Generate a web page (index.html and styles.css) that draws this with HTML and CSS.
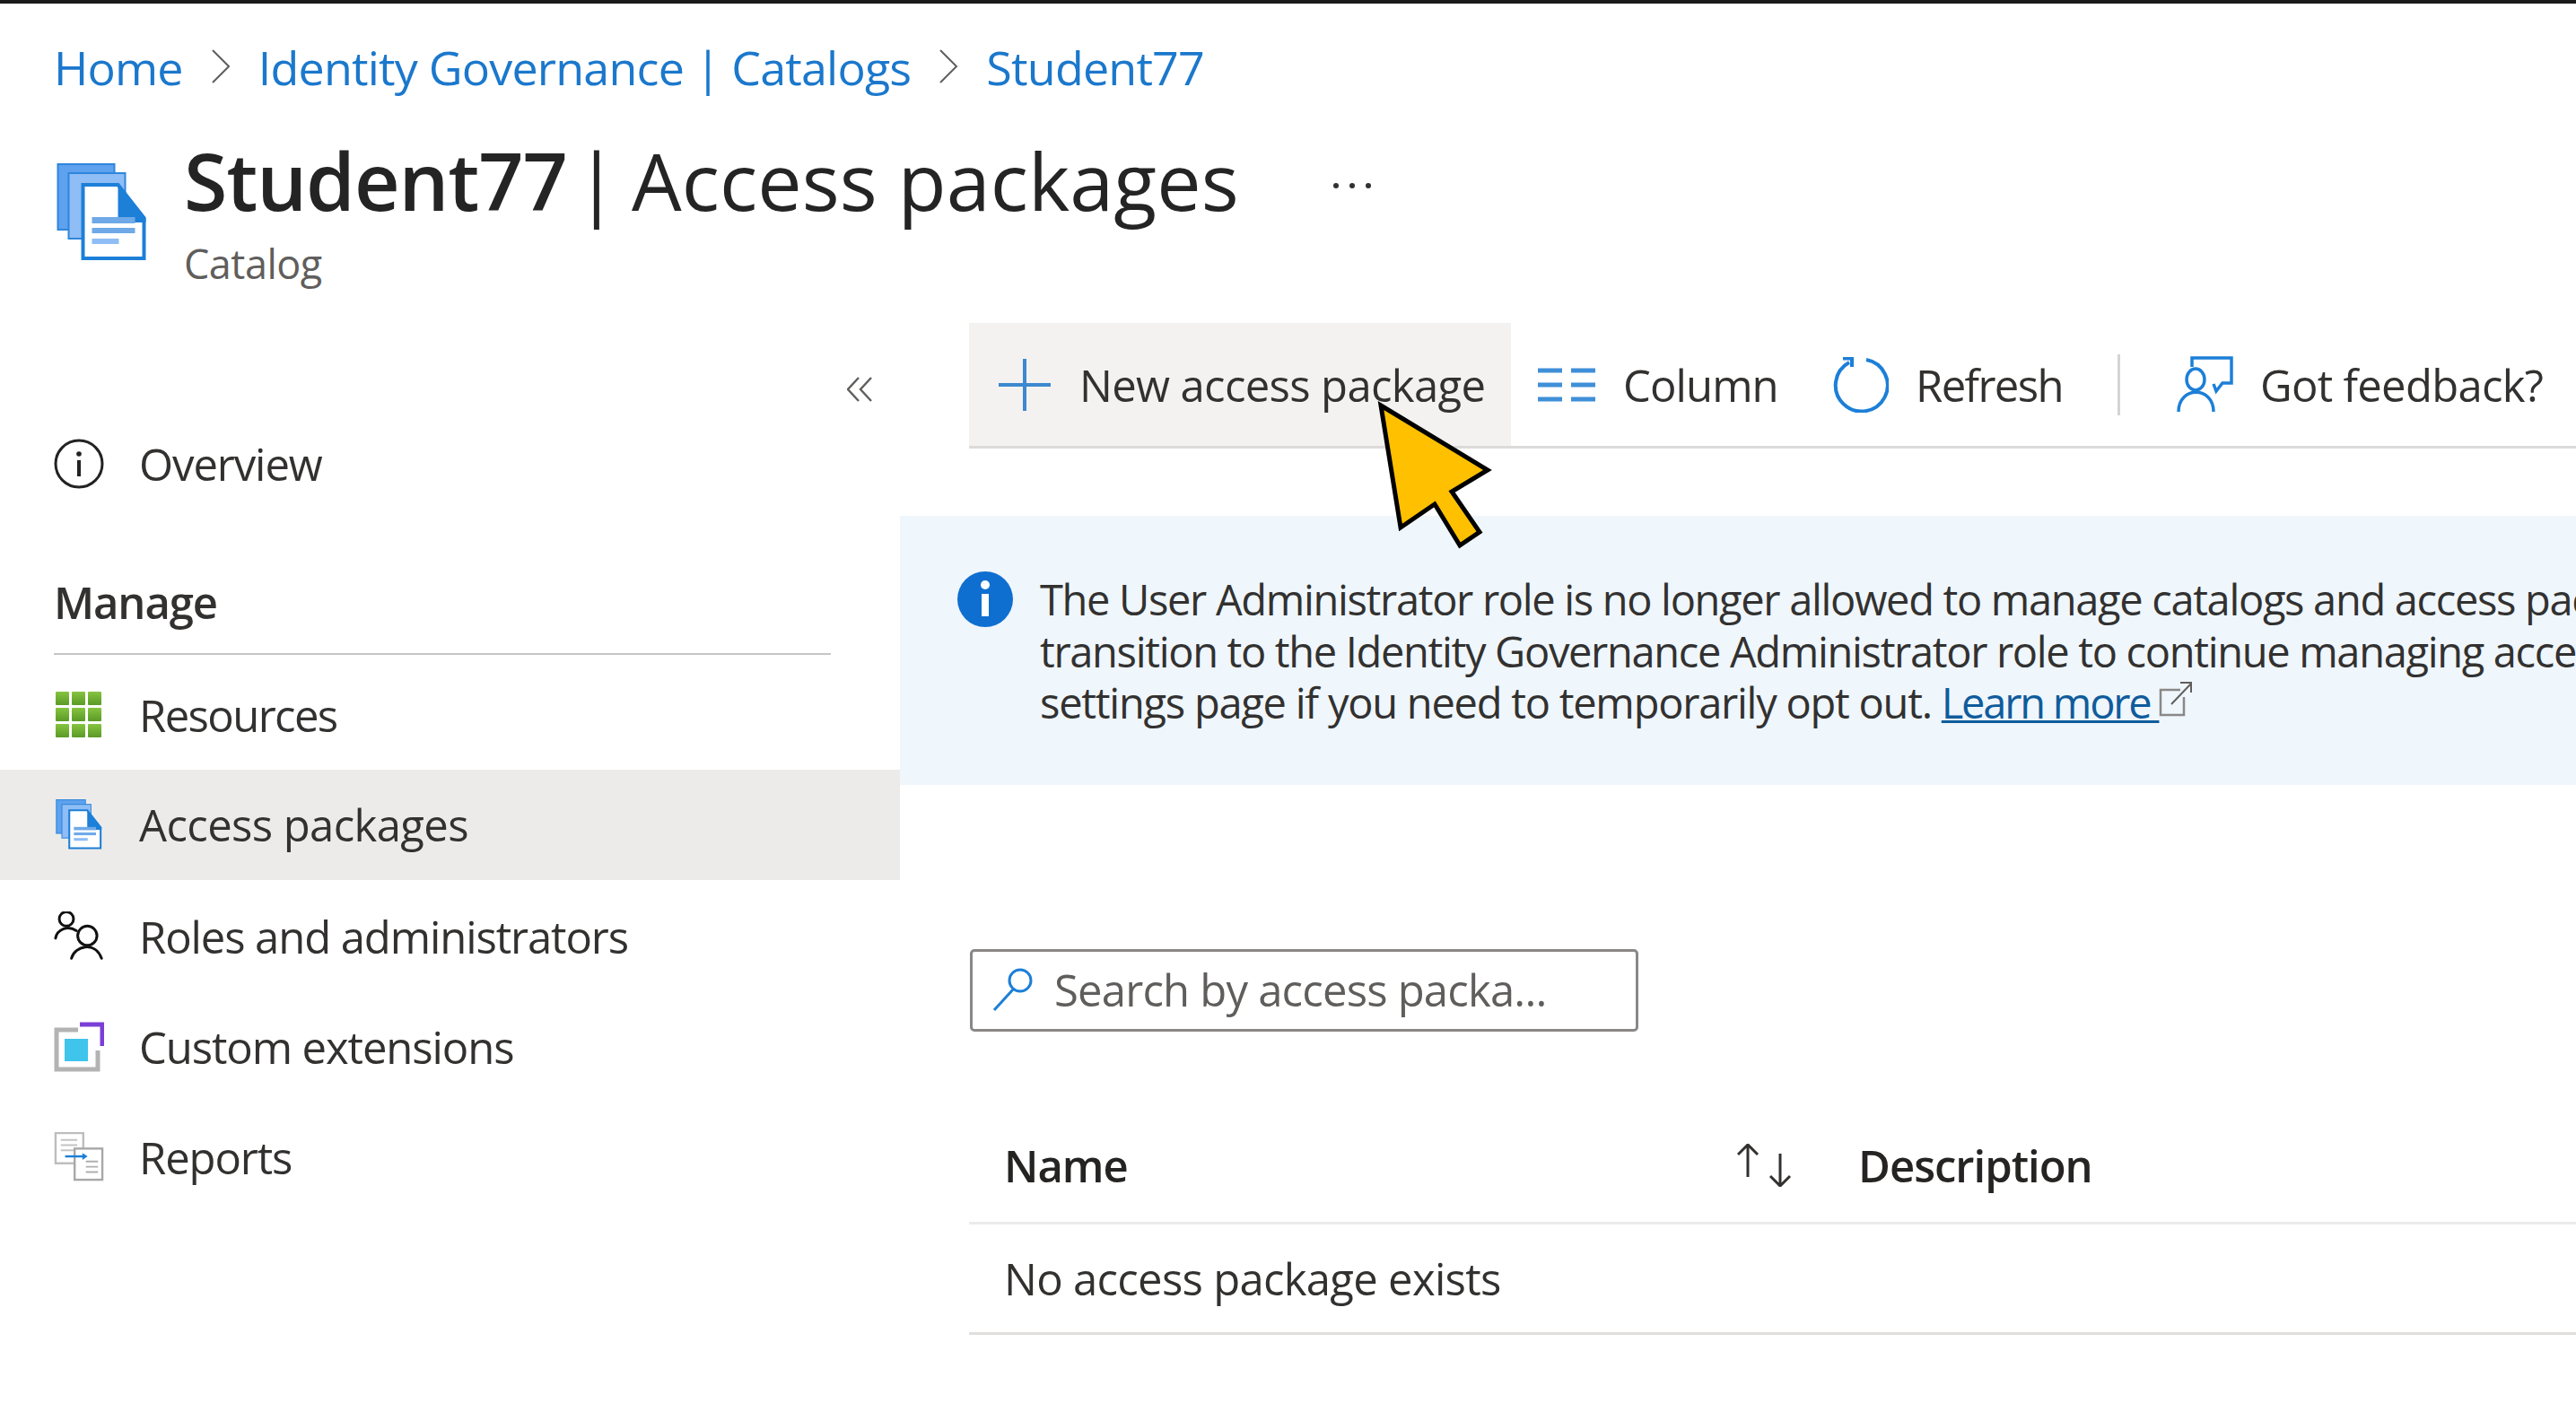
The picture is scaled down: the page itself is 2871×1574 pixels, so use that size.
FILE: index.html
```html
<!DOCTYPE html>
<html lang="en">
<head>
<meta charset="utf-8">
<title>Student77 | Access packages</title>
<link rel="stylesheet" href="styles.css">
</head>
<body>
<svg class="defs" width="0" height="0">
  <defs>
    <linearGradient id="green" x1="0" y1="0" x2="0" y2="1"><stop offset="0" stop-color="#86c440"/><stop offset="1" stop-color="#5a9a26"/></linearGradient>
    <symbol id="pkg" viewBox="64 182 100 109">
      <rect x="65" y="183" width="63" height="73" fill="#5ea1ee" stroke="#2f86dc" stroke-width="2"/>
      <rect x="77" y="193" width="63" height="73" fill="#8fbdf5" stroke="#2f86dc" stroke-width="2"/>
      <path d="M93 206H132L161 243V288H93Z" fill="#fff" stroke="#1c7fd8" stroke-width="4"/>
      <path d="M132 204L163 243V248H132Z" fill="#1c7fd8"/>
      <rect x="103" y="242" width="48" height="7" fill="#6fa9e8"/>
      <rect x="103" y="254" width="48" height="6" fill="#6fa9e8"/>
      <rect x="103" y="266" width="30" height="6" fill="#8fbdf5"/>
    </symbol>
  </defs>
</svg>
<div class="page">
  <div class="topbar"></div>
  <nav class="crumbs">
    <a class="crumb">Home</a>
    <svg class="chev" viewBox="0 0 22 38"><path d="M2 1L20 19L2 37"/></svg>
    <a class="crumb">Identity Governance | Catalogs</a>
    <svg class="chev" viewBox="0 0 22 38"><path d="M2 1L20 19L2 37"/></svg>
    <a class="crumb">Student77</a>
  </nav>
  <header class="head">
    <svg class="head-icon"><use href="#pkg"/></svg>
    <div class="head-text">
      <h1 class="title"><b class="title-strong">Student77</b> <span class="title-sep">|</span> <span class="title-rest">Access packages</span></h1>
      <div class="subtitle">Catalog</div>
    </div>
    <svg class="more" viewBox="0 0 44 6"><circle cx="4" cy="3" r="3"/><circle cx="22" cy="3" r="3"/><circle cx="40" cy="3" r="3"/></svg>
  </header>
  <div class="body">
    <aside class="side">
      <div class="collapse">
        <svg class="collapse-icon" viewBox="0 0 28 28"><path d="M13 1L1 14L13 27M27 1L15 14L27 27"/></svg>
      </div>
      <div class="item">
        <svg class="nav-icon" viewBox="0 0 56 56"><circle cx="28" cy="28" r="26" fill="none" stroke="#222" stroke-width="3"/><rect x="26" y="24" width="4" height="18" fill="#222"/><circle cx="28" cy="17" r="2.8" fill="#222"/></svg>
        <span>Overview</span>
      </div>
      <div class="section">Manage</div>
      <div class="item">
        <svg class="nav-icon" viewBox="0 0 56 56" fill="url(#green)">
          <rect x="2" y="2" width="15" height="15" rx="1"/><rect x="20" y="2" width="15" height="15" rx="1"/><rect x="38" y="2" width="15" height="15" rx="1"/>
          <rect x="2" y="20" width="15" height="15" rx="1"/><rect x="20" y="20" width="15" height="15" rx="1"/><rect x="38" y="20" width="15" height="15" rx="1"/>
          <rect x="2" y="38" width="15" height="15" rx="1"/><rect x="20" y="38" width="15" height="15" rx="1"/><rect x="38" y="38" width="15" height="15" rx="1"/>
        </svg>
        <span class="item-tight">Resources</span>
      </div>
      <div class="item item-active">
        <svg class="nav-icon"><use href="#pkg"/></svg>
        <span>Access packages</span>
      </div>
      <div class="item">
        <svg class="nav-icon" viewBox="58 1015 60 60" fill="none" stroke="#111" stroke-width="3.2" stroke-linecap="round">
          <circle cx="73" cy="1024" r="8.5"/><path d="M60 1047C62 1037 74 1031 85 1038"/>
          <circle cx="98" cy="1044" r="11.5"/><path d="M79 1071C83 1056 107 1050 115 1071"/>
        </svg>
        <span>Roles and administrators</span>
      </div>
      <div class="item">
        <svg class="nav-icon" viewBox="0 0 56 56" fill="none">
          <path d="M27 9H3V53H49V32" stroke="#b3b3b3" stroke-width="5"/>
          <path d="M29 3H54V27" stroke="#7a3fd6" stroke-width="5"/>
          <rect x="12" y="19" width="26" height="25" fill="#3fc4ec"/>
        </svg>
        <span>Custom extensions</span>
      </div>
      <div class="item">
        <svg class="nav-icon" viewBox="59 1264 58 58" fill="none">
          <rect x="61" y="1265" width="32" height="35" fill="#fff" stroke="#bdbdbd" stroke-width="2.5"/>
          <path d="M67 1273H86M67 1279H86M67 1285H86" stroke="#c4c4c4" stroke-width="2"/>
          <rect x="83" y="1283" width="32" height="36" fill="#fff" stroke="#a8a8a8" stroke-width="2.5"/>
          <path d="M96 1298H110M96 1304H110M96 1310H110" stroke="#b0b0b0" stroke-width="2"/>
          <path d="M72 1292H94" stroke="#1c7fd8" stroke-width="2.5"/><path d="M92 1288L98 1292L92 1296Z" fill="#1c7fd8"/>
        </svg>
        <span>Reports</span>
      </div>
    </aside>
    <main class="main">
      <div class="toolbar">
        <div class="tool tool-new">
          <svg class="tool-plus" viewBox="0 0 58 58"><path d="M29 0V58M0 29H58"/></svg>
          <span>New access package</span>
        </div>
        <div class="tool tool-column">
          <svg class="tool-cols" viewBox="0 0 64 38"><path d="M0 3H27M37 3H64M0 19H27M37 19H64M0 35H27M37 35H64"/></svg>
          <span>Column</span>
        </div>
        <div class="tool tool-refresh">
          <svg class="tool-refresh-icon" viewBox="0 0 62 62" fill="none"><path d="M37 3A29 29 0 1 1 18 6"/><path d="M11 1.5H21V11"/></svg>
          <span>Refresh</span>
        </div>
        <div class="tool-sep"></div>
        <div class="tool tool-feedback">
          <svg class="tool-fb" viewBox="2426 397 64 64" fill="none"><path d="M2443 409V399H2487V427H2477L2470 436L2467 428"/><ellipse cx="2447" cy="423" rx="10" ry="12"/><path d="M2428 459C2428 430 2467 430 2467 459"/></svg>
          <span>Got feedback?</span>
        </div>
      </div>
      <section class="banner">
        <svg class="banner-icon" viewBox="0 0 62 62"><circle cx="31" cy="31" r="31" fill="#0f6fd0"/><rect x="27" y="25" width="8" height="25" fill="#fff"/><circle cx="31" cy="15" r="5" fill="#fff"/></svg>
        <div class="banner-text">
          <div class="banner-line banner-line-tight">The User Administrator role is no longer allowed to manage catalogs and access packages. Please</div>
          <div class="banner-line banner-line-tight">transition to the Identity Governance Administrator role to continue managing access packages, or visit the</div>
          <div class="banner-line">settings page if you need to temporarily opt out. <a class="link">Learn more </a><svg class="ext" viewBox="0 0 38 40" fill="none"><path d="M24 10H2V38H28V18" stroke="#8a8886" stroke-width="2.5"/><path d="M14 26L36 3M24 2H36V13" stroke="#605e5c" stroke-width="2"/></svg></div>
        </div>
      </section>
      <div class="search">
        <svg class="search-icon" viewBox="0 0 48 48" fill="none"><circle cx="32" cy="14" r="12"/><path d="M24 24L3 47"/></svg>
        <span class="placeholder">Search by access packa...</span>
      </div>
      <div class="table">
        <div class="cell cell-head cell-name">
          <span>Name</span>
          <svg class="sort" viewBox="0 0 64 48" fill="none"><path d="M12 37V1M1 12L12 1L23 12M48 11V47M37 36L48 47L59 36"/></svg>
        </div>
        <div class="cell cell-head cell-desc">Description</div>
      </div>
      <div class="row">No access package exists</div>
    </main>
  </div>
  <svg class="cursor" viewBox="1530 445 135 170"><path d="M1539 452L1658 524L1618 548L1649 593L1627 608L1599 562L1561 588Z"/></svg>
</div>
</body>
</html>
```
FILE: styles.css
```css
* { box-sizing: border-box; }
html, body { margin: 0; padding: 0; background: #fff; }
.defs { position: absolute; }
.page {
  position: relative;
  width: 2871px;
  height: 1574px;
  overflow: hidden;
  font-family: "Open Sans", "Noto Sans", sans-serif;
  font-size: 49px;
  color: #323130;
  letter-spacing: -0.5px;
}
.topbar { height: 4px; background: #1a1a1a; }
.crumbs {
  height: 144px;
  padding: 0 0 4px 60px;
  display: flex;
  align-items: center;
  gap: 31px;
  color: #1b78cc;
  font-size: 52px;
  letter-spacing: -0.8px;
}
.chev { width: 22px; height: 38px; fill: none; stroke: #605e5c; stroke-width: 2; }
.head { height: 212px; display: flex; padding: 34px 0 0 62px; }
.head-icon { width: 103px; height: 109px; flex: none; }
.head-text { margin-left: 40px; margin-top: -42px; }
.title { margin: 0; font-size: 88px; font-weight: 400; line-height: 122px; color: #242424; letter-spacing: -1px; white-space: nowrap; }
.title-strong { font-weight: 600; }
.title-sep { margin: 0 -6px 0 -13px; }
.title-rest { letter-spacing: 0.1px; }
.subtitle { font-size: 45px; line-height: 60px; color: #605e5c; margin-top: 2px; }
.more { width: 44px; height: 6px; fill: #323130; margin: 22px 0 0 104px; }
.body { display: flex; }
.side { width: 1003px; flex: none; letter-spacing: -1.1px; }
.collapse { height: 95px; display: flex; justify-content: flex-end; padding: 60px 31px 0 0; }
.collapse-icon { width: 28px; height: 28px; fill: none; stroke: #605e5c; stroke-width: 2.4; }
.item { height: 123.3px; padding-left: 60px; display: flex; align-items: center; gap: 39px; white-space: nowrap; }
.item-tight { letter-spacing: -1.6px; }
.item-active { background: #edebe9; letter-spacing: -0.6px; margin-top: -1px; margin-bottom: 1px; }
.nav-icon { width: 56px; height: 56px; flex: none; }
.section {
  height: 152px;
  margin: 0 77px 5px 60px;
  padding-top: 65px;
  line-height: 56px;
  font-weight: 600;
  border-bottom: 2px solid #c8c6c4;
}
.main { flex: 1; min-width: 0; overflow: hidden; }
.toolbar { height: 140px; margin-left: 77px; display: flex; align-items: center; border-bottom: 3px solid #dddbd9; white-space: nowrap; }
.tool { height: 137px; display: flex; align-items: center; }
.tool-new { width: 604px; padding-left: 33px; gap: 32px; background: #f3f2f1; letter-spacing: -0.65px; }
.tool-plus { width: 58px; height: 58px; fill: none; stroke: #3d88cf; stroke-width: 4; }
.tool-column { padding-left: 30px; gap: 31px; width: 359px; letter-spacing: -0.9px; }
.tool-cols { width: 64px; height: 38px; fill: none; stroke: #3f8fd8; stroke-width: 5; }
.tool-refresh { gap: 30px; width: 317px; letter-spacing: -1.6px; }
.tool-refresh-icon { width: 62px; height: 62px; stroke: #1c7fd8; stroke-width: 4; }
.tool-sep { width: 3px; height: 68px; background: #d6d4d2; margin-right: 63px; }
.tool-feedback { gap: 29px; letter-spacing: -0.7px; }
.tool-fb { width: 64px; height: 64px; stroke: #1c7fd8; stroke-width: 3.5; }
.banner { height: 300px; margin-top: 75px; background: #eff6fc; display: flex; padding: 62px 0 0 64px; white-space: nowrap; font-size: 47px; letter-spacing: -1.24px; }
.banner-icon { width: 62px; height: 62px; flex: none; }
.banner-text { margin-left: 30px; margin-top: 3px; }
.banner-line { height: 57.5px; line-height: 57.5px; }
.banner-line-tight { letter-spacing: -1.32px; }
.link { color: #0f5c9c; text-decoration: underline; text-decoration-thickness: 3px; white-space: pre; letter-spacing: -2.2px; }
.ext { width: 38px; height: 40px; vertical-align: 2px; }
.search {
  width: 745px;
  height: 92px;
  margin: 183px 0 0 78px;
  border: 3px solid #8a8886;
  border-radius: 5px;
  display: flex;
  align-items: center;
  padding: 0 0 2px 21px;
  gap: 22px;
  color: #605e5c;
  white-space: nowrap;
  letter-spacing: -0.8px;
}
.search-icon { width: 48px; height: 48px; stroke: #1c7fd8; stroke-width: 3; flex: none; }
.table { margin: 88px 0 0 77px; height: 127px; display: grid; grid-template-columns: 952px 1fr; border-bottom: 3px solid #edebe9; }
.cell { display: flex; align-items: center; padding: 0 0 3px 39px; }
.cell-head { font-weight: 600; color: #252423; letter-spacing: -1px; }
.cell-name { justify-content: space-between; padding-right: 32px; }
.sort { width: 64px; height: 48px; stroke: #323130; stroke-width: 3; }
.row { margin-left: 77px; height: 123px; padding-left: 39px; display: flex; align-items: center; border-bottom: 3px solid #e1dfdd; letter-spacing: -0.7px; }
.cursor { position: absolute; left: 1530px; top: 445px; width: 135px; height: 170px; fill: #ffc000; stroke: #000; stroke-width: 5; stroke-linejoin: miter; }
```
